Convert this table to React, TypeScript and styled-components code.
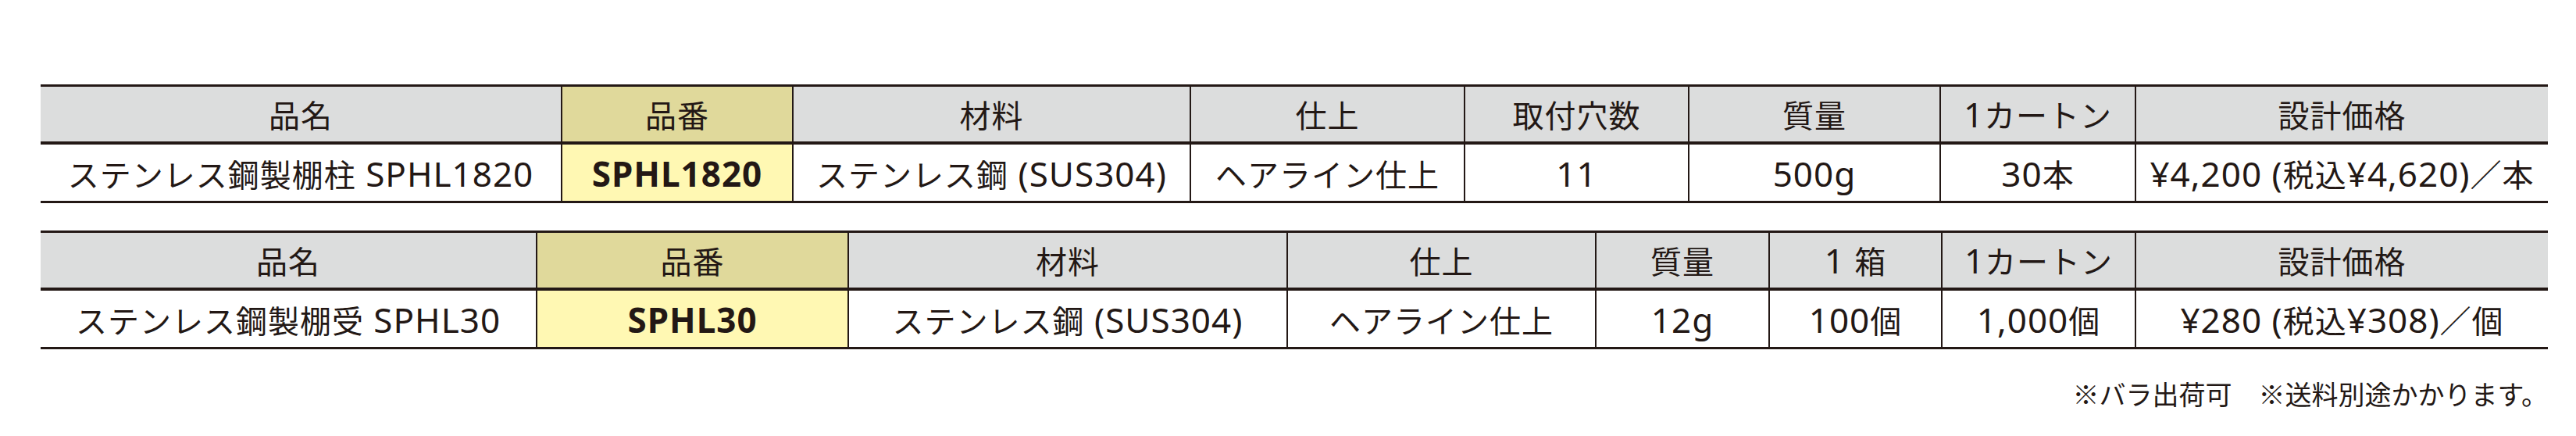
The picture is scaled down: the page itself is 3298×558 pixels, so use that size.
import styled, { createGlobalStyle } from "styled-components";
import * as React from "react";

interface Column {
  label: string;
  width: number;
  accent?: boolean;
}

interface SpecTable {
  columns: Column[];
  values: string[];
}

const tables: SpecTable[] = [
  {
    columns: [
      { label: "品名", width: 666 },
      { label: "品番", width: 296, accent: true },
      { label: "材料", width: 509 },
      { label: "仕上", width: 351 },
      { label: "取付穴数", width: 287 },
      { label: "質量", width: 322 },
      { label: "1カートン", width: 250 },
      { label: "設計価格", width: 529 },
    ],
    values: [
      "ステンレス鋼製棚柱 SPHL1820",
      "SPHL1820",
      "ステンレス鋼 (SUS304)",
      "ヘアライン仕上",
      "11",
      "500g",
      "30本",
      "¥4,200 (税込¥4,620)／本",
    ],
  },
  {
    columns: [
      { label: "品名", width: 634 },
      { label: "品番", width: 399, accent: true },
      { label: "材料", width: 562 },
      { label: "仕上", width: 395 },
      { label: "質量", width: 222 },
      { label: "1 箱", width: 221 },
      { label: "1カートン", width: 248 },
      { label: "設計価格", width: 529 },
    ],
    values: [
      "ステンレス鋼製棚受 SPHL30",
      "SPHL30",
      "ステンレス鋼 (SUS304)",
      "ヘアライン仕上",
      "12g",
      "100個",
      "1,000個",
      "¥280 (税込¥308)／個",
    ],
  },
];

// latin runs are set a size larger than the kana/kanji, as in the printed sheet
const withLatin = (text: string) =>
  text.split(/([A-Za-z0-9¥,.() ]+)/).map((part, i) =>
    /^[A-Za-z0-9¥,.() ]+$/.test(part) ? <Latin key={i}>{part}</Latin> : part
  );

const GlobalStyle = createGlobalStyle`
  html, body {
    margin: 0;
    padding: 0;
    background: #ffffff;
  }

  body {
    font-family: "Noto Sans CJK JP", "Noto Sans", sans-serif;
    color: #231815;
  }
`;

const App: React.FC = () => {
  return (
    <>
      <GlobalStyle/>
      <Page>
        {tables.map((table, t) => (
          <Table key={t} $cols={table.columns.map((c) => `${c.width}px`).join(" ")}>
            {table.columns.map((col, i) => (
              <HeadCell key={`h${i}`} $accent={!!col.accent} $first={i === 0}>
                {withLatin(col.label)}
              </HeadCell>
            ))}
            {table.values.map((value, i) => (
              <BodyCell key={`b${i}`} $accent={!!table.columns[i].accent} $first={i === 0}>
                {withLatin(value)}
              </BodyCell>
            ))}
          </Table>
        ))}
        <Note>※バラ出荷可　※送料別途かかります。</Note>
      </Page>
    </>
  );
};

const Page = styled.div`
  width: 3210px;
  padding: 108px 0 0 52px;
  display: flex;
  flex-direction: column;
  gap: 35px;
`;

const Table = styled.div<{ $cols: string }>`
  display: grid;
  grid-template-columns: ${({ $cols }) => $cols};
  grid-template-rows: 74px 72px;
  border-top: 3px solid #231815;
  border-bottom: 3px solid #231815;
`;

const Cell = styled.div<{ $accent: boolean; $first: boolean }>`
  display: flex;
  align-items: center;
  justify-content: center;
  white-space: nowrap;
  font-size: 40px;
  line-height: 1;
  letter-spacing: 1px;
  border-left: ${({ $first }) => ($first ? "none" : "2px solid #231815")};
`;

const HeadCell = styled(Cell)`
  background-color: ${({ $accent }) => ($accent ? "#e0d99b" : "#dcdddd")};
  border-bottom: 4px solid #231815;
`;

const BodyCell = styled(Cell)`
  background-color: ${({ $accent }) => ($accent ? "#fff8b3" : "#ffffff")};
  font-weight: ${({ $accent }) => ($accent ? 700 : 400)};
  padding-top: 2px;
`;

const Latin = styled.span`
  font-family: "Noto Sans", "Noto Sans CJK JP", sans-serif;
  font-size: 44px;
  white-space: pre;
`;

const Note = styled.div`
  margin-top: 2px;
  text-align: right;
  font-size: 34px;
  line-height: 40px;
`;

export default App;
